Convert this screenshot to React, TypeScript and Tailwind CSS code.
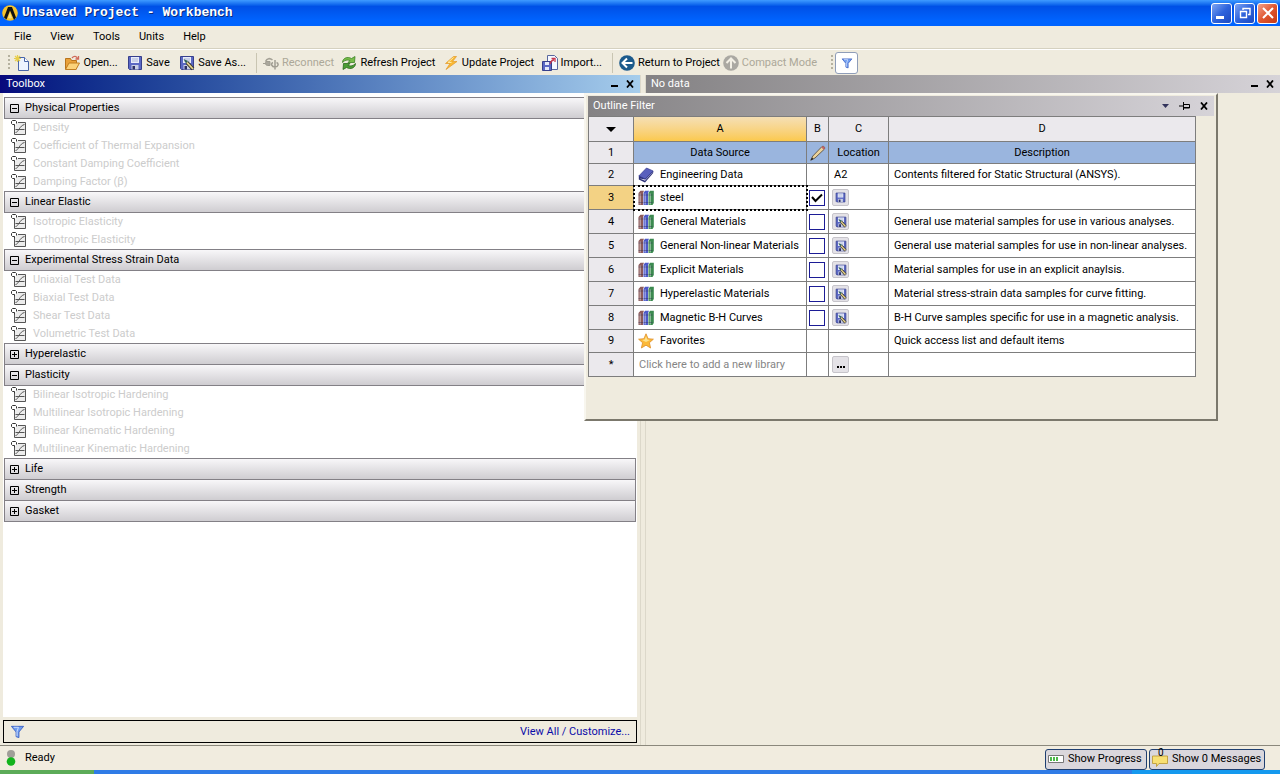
import type { ReactNode } from "react";

type Group = { name: string; open: boolean; items: string[] };

const groups: Group[] = [
    { name: "Physical Properties", open: true, items: ["Density", "Coefficient of Thermal Expansion", "Constant Damping Coefficient", "Damping Factor (β)"] },
    { name: "Linear Elastic", open: true, items: ["Isotropic Elasticity", "Orthotropic Elasticity"] },
    { name: "Experimental Stress Strain Data", open: true, items: ["Uniaxial Test Data", "Biaxial Test Data", "Shear Test Data", "Volumetric Test Data"] },
    { name: "Hyperelastic", open: false, items: [] },
    { name: "Plasticity", open: true, items: ["Bilinear Isotropic Hardening", "Multilinear Isotropic Hardening", "Bilinear Kinematic Hardening", "Multilinear Kinematic Hardening"] },
    { name: "Life", open: false, items: [] },
    { name: "Strength", open: false, items: [] },
    { name: "Gasket", open: false, items: [] },
];

const libraries = [
    { row: 3, name: "steel", checked: true, description: "" },
    { row: 4, name: "General Materials", checked: false, description: "General use material samples for use in various analyses." },
    { row: 5, name: "General Non-linear Materials", checked: false, description: "General use material samples for use in non-linear analyses." },
    { row: 6, name: "Explicit Materials", checked: false, description: "Material samples for use in an explicit anaylsis." },
    { row: 7, name: "Hyperelastic Materials", checked: false, description: "Material stress-strain data samples for curve fitting." },
    { row: 8, name: "Magnetic B-H Curves", checked: false, description: "B-H Curve samples specific for use in a magnetic analysis." },
];

function Icon({ children, className = "size-4" }: { children: ReactNode; className?: string }) {
    return (
        <svg viewBox="0 0 16 16" className={`shrink-0 ${className}`} aria-hidden="true">
            {children}
        </svg>
    );
}

function LogoIcon() {
    return (
        <Icon className="size-4">
            <circle cx="8" cy="8" r="7.8" fill="#f6c32c" />
            <path d="M6 2h4l4 10.500-2 2.500-4-9.500L4.500 14.500 2 12.500z" fill="#111" />
            <path d="M8 7.500 10 13l-2 .6-2-.6z" fill="#fbe28a" />
        </Icon>
    );
}

function NewIcon() {
    return (
        <Icon>
            <path d="M4.500 2.500h6l4 4v9h-10z" fill="#eef4ff" stroke="#4a66a8" />
            <path d="M10.500 2.500v4h4" fill="#fff" stroke="#4a66a8" />
            <path d="M3.500 0v7M0 3.500h7M1 1l5 5M6 1 1 6" stroke="#e8ce4a" strokeWidth="1.200" />
        </Icon>
    );
}

function OpenIcon() {
    return (
        <Icon>
            <path d="M1.500 14V3.500h5l1 2h5V14z" fill="#e9a13a" stroke="#b8741c" />
            <path d="M1.500 14.500 5 8h10.500l-3.500 6.500z" fill="#fbd27a" stroke="#c27e22" />
            <path d="M8 3c2-2.500 4.500-2 5.500.5M14.500 1v3h-3" fill="none" stroke="#d06a5a" strokeWidth="1.300" />
        </Icon>
    );
}

function DiskShape() {
    return (
        <>
            <path d="M1.500 1.500h13v13H2.500l-1-1z" fill="#5b68c4" stroke="#363f8c" />
            <path d="M4 2h8v6H4z" fill="#e8ecfa" />
            <path d="M5 4h6M5 6h6" stroke="#a9b3d6" />
            <path d="M4.500 10h7v4.500h-7z" fill="#c9cfe4" />
            <path d="M5.500 11h2.500v3.500H5.500z" fill="#2b2f66" />
        </>
    );
}

function SaveIcon({ className }: { className?: string }) {
    return (
        <Icon className={className}>
            <DiskShape />
        </Icon>
    );
}

function SaveAsIcon({ className }: { className?: string }) {
    return (
        <Icon className={className}>
            <DiskShape />
            <path d="m8 7.500 6 6.500" stroke="#3d3a30" strokeWidth="3.600" />
            <path d="m8 7.500 6 6.500" stroke="#ead68c" strokeWidth="1.800" />
            <path d="M4.500 4 9 6 7 8.500z" fill="#2f6355" />
        </Icon>
    );
}

function ReconnectIcon() {
    return (
        <Icon>
            <path d="M2.500 6.500C4 3 7 3 9.500 5" fill="none" stroke="#a5a297" strokeWidth="1.600" />
            <path d="M0 8.500h2.500M3 6.500h4v4H4.500c-2 0-2.500-2.500-1.500-4z" fill="#aaa79c" stroke="#a09d92" />
            <path d="M12 5v9.500M10 7.500c-2.500 1-1.500 4.500 2 4.500s4-3.500 1.500-4.500" fill="none" stroke="#a09d92" strokeWidth="1.500" />
        </Icon>
    );
}

function RefreshIcon() {
    return (
        <Icon>
            <path d="M1.500 7.500C1.500 3.500 6 1 10.500 3.500L14 1.500 13.500 7.500H7L9 5.500C6 4.500 4 5 1.500 7.500z" fill="#78bd4a" stroke="#3c8126" strokeWidth="0.800" />
            <path d="M14.500 8.500c0 4-4.500 6.500-9 4L2 14.500l.5-6H9l-2 2c3 1 5 .5 7.500-2z" fill="#4c9d35" stroke="#2a6a1c" strokeWidth="0.800" />
        </Icon>
    );
}

function UpdateIcon() {
    return (
        <Icon>
            <path d="M10.500 1.500 2.500 8.500H7L3 14.500 14 6.500H9.500l4-5z" fill="#f9b934" stroke="#e39a2a" strokeWidth="0.700" />
            <path d="M10.500 2.500 5 7.500h3.500" fill="none" stroke="#fdeaa6" />
        </Icon>
    );
}

function ImportIcon() {
    return (
        <Icon>
            <path d="M5.500.5h7l3 3v11h-10z" fill="#f6f8ff" stroke="#58679e" />
            <path d="M.5 6.500h9v9h-9z" fill="#5b68c4" stroke="#363f8c" />
            <path d="M3 7h4v3H3zM3 12h4v3H3z" fill="#e4e8f8" />
            <path d="M8 9c1-3 2-4 4-4M9.500 3.500H13V7" fill="none" stroke="#c8384e" strokeWidth="1.300" />
        </Icon>
    );
}

function CircleArrow({ color, up = false }: { color: string; up?: boolean }) {
    return (
        <Icon>
            <circle cx="8" cy="8" r="7.800" fill={color} />
            {up ? (
                <path d="M8 13.500V3.500M3.500 8 8 3.500 12.500 8" fill="none" stroke="#f2efe5" strokeWidth="2" />
            ) : (
                <path d="M13.500 8h-10M8 3.500 3.500 8 8 12.500" fill="none" stroke="#fff" strokeWidth="2" />
            )}
        </Icon>
    );
}

function FunnelIcon({ className }: { className?: string }) {
    return (
        <Icon className={className}>
            <path d="M1.500 2.500h13L9.500 8.500v6l-3-1v-5z" fill="#6f9df0" stroke="#3d62c4" />
            <path d="M4 3.500h5L7.500 8v5" fill="none" stroke="#d2e2ff" />
        </Icon>
    );
}

function PropertyIcon() {
    return (
        <Icon>
            <path d="M3.500 3.500V14.500h11v-12H7" fill="#ececec" stroke="#555" />
            <path d="M3.500 6.500V4.500H1.500l-1-1v-2l1-1h3l1 1v2" fill="#fff" stroke="#333" />
            <path d="M4.500 12.500c3 0 4-7 9-8M4.500 9.500h9" fill="none" stroke="#555" />
        </Icon>
    );
}

function LibraryIcon() {
    return (
        <Icon>
            <path d="M.5 3 2.500.8H6L5 3v12H.5z" fill="#8c5a5a" />
            <path d="M5.500 3 7 .8h4L10 3v12H5.500z" fill="#4c59c8" />
            <path d="M10.500 3 12 .8h3.800V13L14.500 15h-4z" fill="#3c8a50" />
            <path d="M2.200 3.500v11M7.200 3.500v11M12.200 3.500v11" stroke="#fff" strokeOpacity=".5" strokeWidth="1.200" />
            <path d="M.5 5h4.500M5.500 5H10M10.500 5h4M.5 12.500H5M5.500 12.500H10M10.500 12.500h4" stroke="#2a2a50" strokeOpacity=".4" />
        </Icon>
    );
}

function BookIcon() {
    return (
        <Icon>
            <path d="M.8 9v3.500L7 15.500l8.200-9.500V4z" fill="#2b2f78" />
            <path d="m1.800 11.500 5.200 2.300 7.500-8.300V5l-7 7.500z" fill="#e8eaf6" />
            <path d="M.8 9 8.500 1 15.200 4 7.200 12z" fill="#5960bd" stroke="#343a8e" strokeWidth="0.700" />
        </Icon>
    );
}

function StarIcon() {
    return (
        <Icon>
            <path d="m8 .8 2.100 4.900 5.300.5-4 3.500 1.200 5.300L8 12.200 3.400 15l1.200-5.300-4-3.500 5.300-.5z" fill="#fbb938" stroke="#df8f2a" strokeWidth="0.800" />
            <path d="m8 3 1.200 3.500 2.800.4L8 9 4 7l2.800-.5z" fill="#fee38e" />
        </Icon>
    );
}

function PencilIcon() {
    return (
        <Icon>
            <path d="m.8 15.200 2-4.200L12 1.500c1.500-1 3.500 1 2.500 2.500L5 13z" fill="#ecd39a" stroke="#4f4334" strokeWidth="0.800" />
            <path d="m11.200 2.300 2.500 2.500 1-1c.6-1.500-1-3-2.300-2.500z" fill="#c0666a" />
            <path d="m.5 15.500 1.500-3 1.500 1.500z" fill="#222" />
        </Icon>
    );
}

function CloseGlyph() {
    return (
        <svg viewBox="0 0 8 8" className="size-2" aria-hidden="true">
            <path d="m1 .5 6 7m0-7-6 7" stroke="#000" strokeWidth="1.800" />
        </svg>
    );
}

function MinimizeGlyph() {
    return <span className="block h-0.5 w-[7px] bg-black" />;
}

function TitleBar() {
    return (
        <header className="flex h-[26px] shrink-0 items-center justify-between bg-linear-to-b from-[#3f9bff] via-[#0050e6] via-25% to-[#0064ff] to-80% pr-0.5 pl-0.5 text-white">
            <div className="flex items-center gap-1">
                <LogoIcon />
                <h1 className="font-['Liberation_Mono',monospace] text-[13px] font-bold whitespace-nowrap text-shadow-[1px_1px_0_#0a2a7a]">Unsaved Project - Workbench</h1>
            </div>
            <div className="flex gap-0.5">
                <button aria-label="Minimize" className="flex size-[21px] items-end rounded-[3px] border border-white bg-linear-to-br from-[#7fa4f2] via-[#2e63dc] to-[#1d49c0] p-1">
                    <span className="block h-[3px] w-2 bg-white" />
                </button>
                <button aria-label="Restore" className="grid size-[21px] place-content-center rounded-[3px] border border-white bg-linear-to-br from-[#7fa4f2] via-[#2e63dc] to-[#1d49c0]">
                    <svg viewBox="0 0 12 12" className="size-3" aria-hidden="true">
                        <path d="M4 3V1.500h7v6H9M1.500 4.500h6v6h-6z" fill="none" stroke="#fff" strokeWidth="1.400" />
                    </svg>
                </button>
                <button aria-label="Close" className="grid size-[21px] place-content-center rounded-[3px] border border-white bg-linear-to-br from-[#f0a088] via-[#e0562f] to-[#c53a14]">
                    <svg viewBox="0 0 12 12" className="size-3" aria-hidden="true">
                        <path d="m1 1 10 10M11 1 1 11" stroke="#fff" strokeWidth="2" />
                    </svg>
                </button>
            </div>
        </header>
    );
}

function ToolButton({ icon, label, disabled = false }: { icon: ReactNode; label: string; disabled?: boolean }) {
    return (
        <button disabled={disabled} className="flex items-center gap-[3px] text-black disabled:text-[#aca899]">
            {icon}
            {label}
        </button>
    );
}

function Grip() {
    return <span className="mx-0.5 h-[15px] w-0.5 bg-[repeating-linear-gradient(to_bottom,#b5b19f_0_2px,transparent_2px_4px)]" />;
}

function Separator() {
    return <span className="h-5 w-px bg-[#c9c5b2]" />;
}

function Toolbar() {
    return (
        <div role="toolbar" className="flex h-[26px] shrink-0 items-center border-t border-white pl-1.5 whitespace-nowrap">
            <div className="flex w-[250px] items-center">
                <Grip />
                <div className="flex flex-1 justify-between pr-2.5 pl-0.5">
                    <ToolButton icon={<NewIcon />} label="New" />
                    <ToolButton icon={<OpenIcon />} label="Open..." />
                    <ToolButton icon={<SaveIcon />} label="Save" />
                    <ToolButton icon={<SaveAsIcon />} label="Save As..." />
                </div>
            </div>
            <Separator />
            <div className="flex w-[355px] justify-between px-1.5 pr-2.5">
                <ToolButton icon={<ReconnectIcon />} label="Reconnect" disabled />
                <ToolButton icon={<RefreshIcon />} label="Refresh Project" />
                <ToolButton icon={<UpdateIcon />} label="Update Project" />
                <ToolButton icon={<ImportIcon />} label="Import..." />
            </div>
            <Separator />
            <div className="flex w-[216px] justify-between pr-3 pl-1.5">
                <ToolButton icon={<CircleArrow color="#1c5a8c" />} label="Return to Project" />
                <ToolButton icon={<CircleArrow color="#aaa8a2" up />} label="Compact Mode" disabled />
            </div>
            <Grip />
            <button aria-label="Filter" className="grid h-[22px] w-[23px] place-content-center rounded-[3px] border border-[#8f9db8] bg-white">
                <FunnelIcon className="size-3" />
            </button>
        </div>
    );
}

function Toolbox() {
    return (
        <section className="flex w-1/2 flex-col">
            <div className="flex h-[18px] items-center justify-between bg-linear-to-r from-[#08087c] to-[#a6cdec] pr-1.5 pl-1.5">
                <h2 className="text-white">Toolbox</h2>
                <div className="flex items-center gap-2">
                    <button aria-label="Minimize toolbox" className="pt-1"><MinimizeGlyph /></button>
                    <button aria-label="Close toolbox"><CloseGlyph /></button>
                </div>
            </div>
            <div className="mr-[3px] ml-[3px] flex-1 bg-white pt-1 pr-px pl-px">
                {groups.map((group, i) => (
                    <div key={group.name} className={i > 0 && !groups[i - 1].open ? "-mt-px" : ""}>
                        <button aria-expanded={group.open} className="flex h-[22px] w-full items-center gap-1.5 border border-[#838086] bg-linear-to-b from-[#f8f7f9] to-[#cfcdd1] pl-[5px]">
                            <svg viewBox="0 0 9 9" className="size-[9px]" aria-hidden="true">
                                <path d={group.open ? "M.5.5h8v8h-8zM2 4.500h5" : "M.5.5h8v8h-8zM2 4.500h5M4.500 2v5"} fill="none" stroke="#000" />
                            </svg>
                            {group.name}
                        </button>
                        {group.open && (
                            <ul>
                                {group.items.map((item) => (
                                    <li key={item} className="flex h-[18px] items-center gap-1.5 pl-[7px] text-[#cccccc]">
                                        <PropertyIcon />
                                        {item}
                                    </li>
                                ))}
                            </ul>
                        )}
                    </div>
                ))}
            </div>
            <div className="mt-[3px] mr-[3px] mb-0.5 ml-[3px] flex h-[23px] items-center justify-between border border-black px-1.5">
                <button aria-label="Filter toolbox"><FunnelIcon className="size-[15px]" /></button>
                <a href="#customize" className="text-[#0b0ba8]">View All / Customize...</a>
            </div>
        </section>
    );
}

const cell = "border-r border-b border-[#7d7d7d] p-0";

function RowHead({ children, active = false }: { children: ReactNode; active?: boolean }) {
    return (
        <th scope="row" className={`${cell} text-center font-normal ${active ? "bg-[#f3d284]" : "bg-[#ebe9ed]"}`}>
            {children}
        </th>
    );
}

function OutlineTable() {
    return (
        <table className="w-[608px] table-fixed border-separate border-spacing-0 border-t border-l border-[#7d7d7d] bg-white">
            <colgroup>
                <col className="w-[45px]" />
                <col className="w-[173px]" />
                <col className="w-[22px]" />
                <col className="w-[60px]" />
                <col />
            </colgroup>
            <thead>
                <tr className="h-[25px] bg-[#ebe9ed]">
                    <th className={cell}>
                        <svg viewBox="0 0 10 5" className="mx-auto h-[5px] w-2.5" aria-hidden="true">
                            <path d="M0 0h10L5 5z" />
                        </svg>
                    </th>
                    <th className={`${cell} bg-linear-to-b from-[#f5dfb4] to-[#fbc94c] font-normal`}>A</th>
                    <th className={`${cell} font-normal`}>B</th>
                    <th className={`${cell} font-normal`}>C</th>
                    <th className={`${cell} font-normal`}>D</th>
                </tr>
                <tr className="h-[22px] bg-[#9ab5de]">
                    <RowHead>1</RowHead>
                    <th className={`${cell} font-normal`}>Data Source</th>
                    <th aria-label="Edit" className={cell}>
                        <span className="flex justify-center"><PencilIcon /></span>
                    </th>
                    <th className={`${cell} font-normal`}>Location</th>
                    <th className={`${cell} font-normal`}>Description</th>
                </tr>
            </thead>
            <tbody>
                <tr className="h-[22px]">
                    <RowHead>2</RowHead>
                    <td className={cell}>
                        <div className="flex items-center gap-1.5 pl-1"><BookIcon />Engineering Data</div>
                    </td>
                    <td className={cell} />
                    <td className={`${cell} pl-[5px]`}>A2</td>
                    <td className={`${cell} pl-[5px]`}>Contents filtered for Static Structural (ANSYS).</td>
                </tr>
                {libraries.map((lib) => (
                    <tr key={lib.row} className="h-6">
                        <RowHead active={lib.checked}>{lib.row}</RowHead>
                        <td className={`${cell} ${lib.checked ? "outline-2 -outline-offset-1 outline-dotted outline-black" : ""}`}>
                            <label htmlFor={`lib-${lib.row}`} className="flex items-center gap-1.5 pl-1 whitespace-nowrap"><LibraryIcon />{lib.name}</label>
                        </td>
                        <td className={cell}>
                            <span className="flex pl-0.5">
                                <input
                                    id={`lib-${lib.row}`}
                                    type="checkbox"
                                    defaultChecked={lib.checked}
                                    className="peer size-4 appearance-none border border-[#1c1c96] bg-white"
                                />
                                <svg viewBox="0 0 16 16" className="pointer-events-none absolute hidden size-4 peer-checked:block" aria-hidden="true">
                                    <path d="m3 7 3.500 4L13 4.500" fill="none" stroke="#000" strokeWidth="2" />
                                </svg>
                            </span>
                        </td>
                        <td className={cell}>
                            <button aria-label={`Save ${lib.name}`} className="ml-[3px] grid size-[17px] place-content-center rounded-[2px] border border-[#c6c4ca] bg-[#e4e2e7]">
                                {lib.checked ? <SaveIcon className="size-[11px]" /> : <SaveAsIcon className="size-3" />}
                            </button>
                        </td>
                        <td className={`${cell} pl-[5px] whitespace-nowrap`}>{lib.description}</td>
                    </tr>
                ))}
                <tr className="h-[23px]">
                    <RowHead>9</RowHead>
                    <td className={cell}>
                        <div className="flex items-center gap-1.5 pl-1"><StarIcon />Favorites</div>
                    </td>
                    <td className={cell} />
                    <td className={cell} />
                    <td className={`${cell} pl-[5px]`}>Quick access list and default items</td>
                </tr>
                <tr className="h-6">
                    <RowHead>*</RowHead>
                    <td className={cell}>
                        <input aria-label="New library" placeholder="Click here to add a new library" className="block w-full pl-[5px] placeholder:text-[#858585]" />
                    </td>
                    <td className={cell} />
                    <td className={cell}>
                        <button aria-label="Browse" className="ml-[3px] flex size-[17px] items-end justify-center gap-px rounded-[2px] border border-[#c6c4ca] bg-[#e4e2e7] pb-1">
                            <span className="size-0.5 bg-black" />
                            <span className="size-0.5 bg-black" />
                            <span className="size-0.5 bg-black" />
                        </button>
                    </td>
                    <td className={cell} />
                </tr>
            </tbody>
        </table>
    );
}

function OutlineFilter() {
    return (
        <section className="absolute top-[93px] left-[584px] h-[328px] w-[634px] border-t-2 border-r-2 border-b-2 border-l-2 border-t-[#f8f6ee] border-r-[#7b786c] border-b-[#7b786c] border-l-[#f8f6ee] bg-[#efebde] pt-px pl-0.5">
            <div className="mr-0.5 flex h-5 items-center justify-between bg-linear-to-r from-[#848284] to-[#d6d3d8] pr-1.5 pl-[5px]">
                <h2 className="text-white">Outline Filter</h2>
                <div className="flex items-center gap-2.5">
                    <button aria-label="Options">
                        <svg viewBox="0 0 7 4" className="h-1 w-[7px]" aria-hidden="true"><path d="M0 0h7L3.500 4z" fill="#33335c" /></svg>
                    </button>
                    <button aria-label="Pin">
                        <svg viewBox="0 0 11 8" className="h-2 w-[11px]" aria-hidden="true"><path d="M0 4h4M4.500 0v8M5 2.500h5.500V6H5M5 5.500h5" fill="none" stroke="#000" /></svg>
                    </button>
                    <button aria-label="Close outline filter"><CloseGlyph /></button>
                </div>
            </div>
            <OutlineTable />
        </section>
    );
}

function StatusBar() {
    return (
        <footer className="flex h-[25px] shrink-0 items-center justify-between border-t border-[#8b887c] bg-[#f1ecdf] pr-[15px] pl-[5px]">
            <div className="flex items-center gap-2">
                <svg viewBox="0 0 12 16" className="h-4 w-3" aria-hidden="true">
                    <circle cx="6" cy="4" r="4" fill="#a09e98" />
                    <circle cx="6" cy="11.500" r="4.300" fill="#12b31c" />
                </svg>
                Ready
            </div>
            <div className="flex gap-0.5 pt-0.5">
                <button className="flex h-[21px] w-[102px] items-center gap-1 rounded-[3px] border border-[#1f3f70] bg-[#dad7dc] pl-0.5">
                    <svg viewBox="0 0 16 8" className="h-2 w-4" aria-hidden="true">
                        <path d="M.5.5h15v7H.5z" fill="#fff" stroke="#777" />
                        <path d="M2 2h2v4H2zM5 2h2v4H5zM8 2h2v4H8z" fill="#4db848" />
                    </svg>
                    Show Progress
                </button>
                <button className="flex h-[21px] w-[116px] items-center gap-1 rounded-[3px] border border-[#1f3f70] bg-[#dad7dc] pl-0.5">
                    <span className="relative">
                        <Icon>
                            <path d="M.5 5h15v7.500H7L4.500 15.500v-3h-4z" fill="#f8e073" stroke="#b9952f" strokeWidth="0.800" />
                        </Icon>
                        <span className="absolute -top-1 left-1.5 text-[10px] leading-3">0</span>
                    </span>
                    Show 0 Messages
                </button>
            </div>
        </footer>
    );
}

export default function App() {
    return (
        <main className="relative flex h-screen flex-col overflow-hidden bg-[#efebde] font-[Roboto,'DejaVu_Sans_Condensed',sans-serif] text-[11px] leading-[14px] text-black">
            <TitleBar />
            <nav className="flex h-[23px] shrink-0 items-center gap-[19px] border-b border-[#d5d1c0] pl-3.5">
                {["File", "View", "Tools", "Units", "Help"].map((menu) => (
                    <button key={menu}>{menu}</button>
                ))}
            </nav>
            <Toolbar />
            <div className="flex min-h-0 flex-1">
                <Toolbox />
                <div className="w-1.5 border-x border-[#dcd8ca]" />
                <section className="flex-1">
                    <div className="flex h-[18px] items-center justify-between bg-linear-to-r from-[#848284] to-[#d6d3d8] pr-1.5 pl-[5px]">
                        <h2 className="text-white">No data</h2>
                        <div className="flex items-center gap-2">
                            <button aria-label="Minimize pane" className="pt-1"><MinimizeGlyph /></button>
                            <button aria-label="Close pane"><CloseGlyph /></button>
                        </div>
                    </div>
                </section>
            </div>
            <StatusBar />
            <div className="flex h-1 shrink-0">
                <div className="w-[94px] bg-[#5cab58]" />
                <div className="flex-1 bg-[#2f7be6]" />
                <div className="w-[148px] bg-[#1599ee]" />
            </div>
            <OutlineFilter />
        </main>
    );
}
